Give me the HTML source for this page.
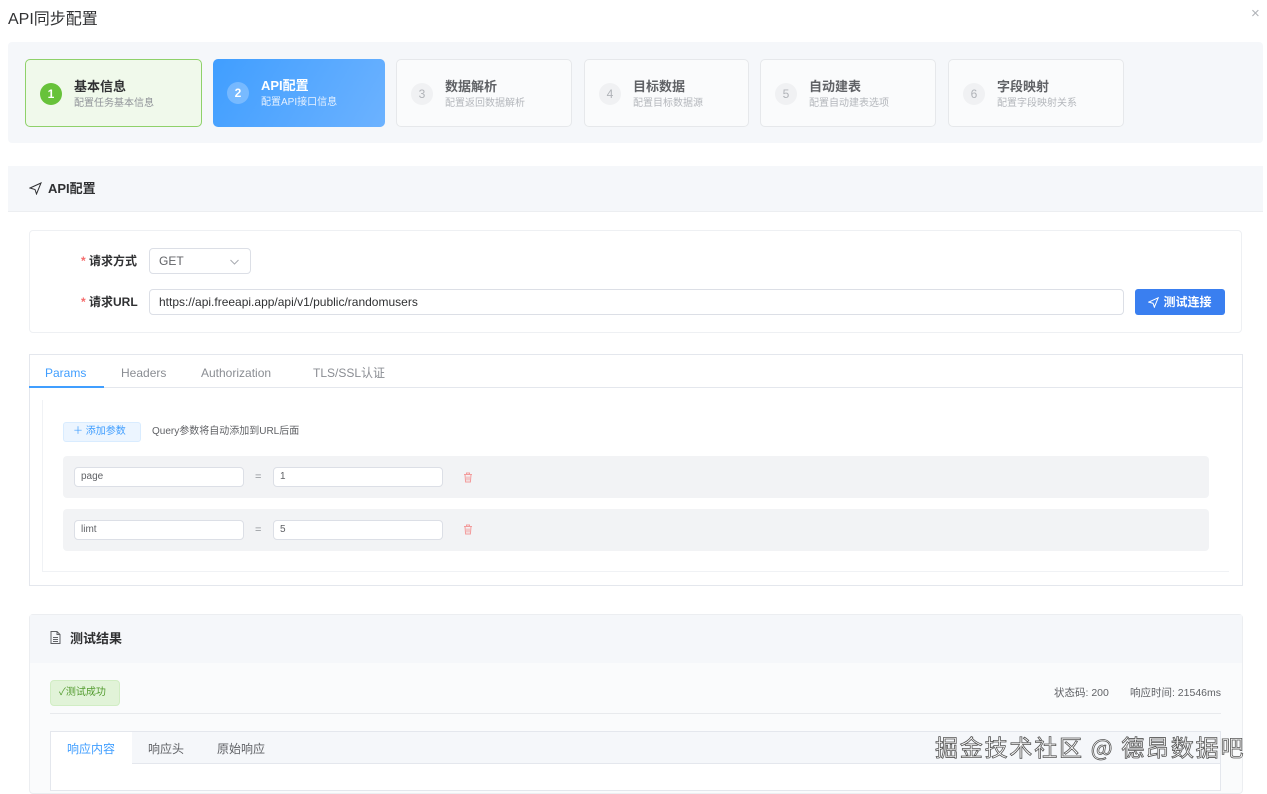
<!DOCTYPE html>
<html><head><meta charset="utf-8"><style>
*{box-sizing:border-box;margin:0;padding:0}
body{width:1267px;height:784px;overflow:hidden;background:#fff;font-family:"Liberation Sans","Noto Sans CJK SC",sans-serif;color:#303133;position:relative;line-height:1}
.a{position:absolute}
.card{position:absolute;top:59px;height:68px;border-radius:5px;border:1px solid #e6e8eb;background:#fafbfc}
.card .n{position:absolute;left:14px;top:23px;width:22px;height:22px;border-radius:50%;background:#f0f1f3;color:#b0b3b8;font-size:12px;text-align:center;line-height:22px}
.card .t{position:absolute;left:48px;top:20px;font-size:13px;font-weight:bold;color:#606266}
.card .s{position:absolute;left:48px;top:39px;font-size:10px;color:#b4b7bc}
.inp{position:absolute;background:#fff;border:1px solid #dcdfe6;border-radius:4px;font-size:10px;color:#606266;padding-left:6px}
.inp span.v{position:absolute;left:6px;top:50%;transform:translateY(-50%)}
.tab{position:absolute;top:366px;font-size:12px;color:#8a8d93;line-height:14px}
</style></head><body>
<div class="a" style="left:8px;top:12px;font-size:16px;color:#303133">API同步配置</div>
<div class="a" style="left:1251px;top:6px;font-size:15px;color:#b0b3b8">×</div>

<div class="a" style="left:8px;top:42px;width:1255px;height:101px;background:#f5f7fa;border-radius:4px"></div>
<div class="card" style="left:25px;width:177px;border:1px solid #8fd16a;background:#f0f9eb"><div class="n" style="background:#67c23a;color:#fff;font-weight:bold">1</div><div class="t" style="color:#303133">基本信息</div><div class="s" style="color:#909399">配置任务基本信息</div></div>
<div class="card" style="left:213px;width:172px;border:none;background:linear-gradient(120deg,#409eff,#6cb2ff)"><div class="n" style="background:rgba(255,255,255,.25);color:#fff;font-weight:bold">2</div><div class="t" style="color:#fff">API配置</div><div class="s" style="color:#e6f1ff">配置API接口信息</div></div>
<div class="card" style="left:396px;width:176px"><div class="n">3</div><div class="t">数据解析</div><div class="s">配置返回数据解析</div></div>
<div class="card" style="left:584px;width:165px"><div class="n">4</div><div class="t">目标数据</div><div class="s">配置目标数据源</div></div>
<div class="card" style="left:760px;width:176px"><div class="n">5</div><div class="t">自动建表</div><div class="s">配置自动建表选项</div></div>
<div class="card" style="left:948px;width:176px"><div class="n">6</div><div class="t">字段映射</div><div class="s">配置字段映射关系</div></div>

<div class="a" style="left:8px;top:166px;width:1255px;height:46px;background:#f5f7fa;border-bottom:1px solid #eceef1"></div>
<svg class="a" style="left:29px;top:182px" width="13" height="13" viewBox="0 0 13 13"><path d="M12 1L1 6l5 1.5L7.5 12z" fill="none" stroke="#303133" stroke-width="1"/></svg>
<div class="a" style="left:48px;top:182px;font-size:13px;font-weight:bold">API配置</div>

<div class="a" style="left:29px;top:230px;width:1213px;height:103px;border:1px solid #eef0f3;border-radius:4px"></div>
<div class="a" style="left:81px;top:255px;font-size:12px;font-weight:bold;color:#303133"><span style="color:#f56c6c">* </span>请求方式</div>
<div class="a" style="left:81px;top:296px;font-size:12px;font-weight:bold;color:#303133"><span style="color:#f56c6c">* </span>请求URL</div>
<div class="inp" style="left:149px;top:248px;width:102px;height:26px;font-size:12px"><span class="v" style="left:9px">GET</span><svg style="position:absolute;right:11px;top:10px" width="9" height="6" viewBox="0 0 9 6"><path d="M.5 1l4 4 4-4" fill="none" stroke="#a8abb2"/></svg></div>
<div class="inp" style="left:149px;top:289px;width:975px;height:26px;font-size:12px;color:#303133"><span class="v" style="left:9px">https://api.freeapi.app/api/v1/public/randomusers</span></div>
<div class="a" style="left:1135px;top:289px;width:90px;height:26px;background:#3a7ff0;border-radius:3px;color:#fff;font-size:12px;font-weight:bold;display:flex;align-items:center;justify-content:center;gap:4px">
<svg width="11" height="11" viewBox="0 0 13 13"><path d="M12 1L1 6l5 1.5L7.5 12z" fill="none" stroke="#fff" stroke-width="1.2"/></svg>测试连接</div>

<div class="a" style="left:29px;top:354px;width:1214px;height:232px;border:1px solid #e4e7ed"></div>
<div class="a" style="left:29px;top:387px;width:1214px;height:1px;background:#e4e7ed"></div>
<div class="a" style="left:29px;top:386px;width:75px;height:2px;background:#409eff"></div>
<div class="tab" style="left:45px;color:#409eff">Params</div>
<div class="tab" style="left:121px">Headers</div>
<div class="tab" style="left:201px">Authorization</div>
<div class="tab" style="left:313px">TLS/SSL认证</div>
<div class="a" style="left:42px;top:400px;width:1187px;height:172px;border:1px solid #f0f2f5;border-top:none;border-right:none"></div>
<div class="a" style="left:63px;top:422px;width:78px;height:20px;background:#ecf5ff;border:1px solid #d9ecff;border-radius:3px;color:#409eff;font-size:10px;display:flex;align-items:center;padding-left:9px">＋ 添加参数</div>
<div class="a" style="left:152px;top:427px;font-size:10px;color:#606266">Query参数将自动添加到URL后面</div>
<div class="a" style="left:63px;top:456px;width:1146px;height:42px;background:#f2f3f5;border-radius:4px"></div>
<div class="a" style="left:63px;top:509px;width:1146px;height:42px;background:#f2f3f5;border-radius:4px"></div>
<div class="inp" style="left:74px;top:467px;width:170px;height:20px"><span class="v">page</span></div>
<div class="a" style="left:255px;top:472px;font-size:11px;color:#909399">=</div>
<div class="inp" style="left:273px;top:467px;width:170px;height:20px"><span class="v">1</span></div>
<div class="inp" style="left:74px;top:520px;width:170px;height:20px"><span class="v">limt</span></div>
<div class="a" style="left:255px;top:525px;font-size:11px;color:#909399">=</div>
<div class="inp" style="left:273px;top:520px;width:170px;height:20px"><span class="v">5</span></div>
<svg class="a" style="left:463px;top:472px" width="10" height="11" viewBox="0 0 10 11"><path d="M1 2.5h8M3.5 2.5V1h3v1.5M2 2.5l.6 7.5h4.8L8 2.5M4 4.5v4M6 4.5v4" fill="none" stroke="#f39b9b" stroke-width="1"/></svg>
<svg class="a" style="left:463px;top:524px" width="10" height="11" viewBox="0 0 10 11"><path d="M1 2.5h8M3.5 2.5V1h3v1.5M2 2.5l.6 7.5h4.8L8 2.5M4 4.5v4M6 4.5v4" fill="none" stroke="#f39b9b" stroke-width="1"/></svg>

<div class="a" style="left:29px;top:614px;width:1214px;height:180px;border:1px solid #eceef1;border-radius:4px;background:#fafbfc"></div>
<div class="a" style="left:30px;top:615px;width:1212px;height:48px;background:#f5f7fa"></div>
<svg class="a" style="left:50px;top:631px" width="11" height="13" viewBox="0 0 11 13"><path d="M1 .5h6l3 3v9H1zM7 .5v3h3M3 6.5h5M3 8.5h5M3 10.5h5" fill="none" stroke="#606266" stroke-width="1"/></svg>
<div class="a" style="left:70px;top:632px;font-size:13px;font-weight:bold">测试结果</div>
<div class="a" style="left:50px;top:680px;width:70px;height:26px;background:#e1f3d8;border:1px solid #d1edc4;border-radius:4px;font-size:10px;color:#529b2e;display:flex;align-items:center;padding-left:8px">✓测试成功</div>
<div class="a" style="left:1054px;top:688px;width:167px;font-size:10.5px;color:#606266;display:flex;justify-content:space-between"><span>状态码: 200</span><span>响应时间: 21546ms</span></div>
<div class="a" style="left:50px;top:713px;width:1171px;height:1px;background:#e8eaed"></div>
<div class="a" style="left:50px;top:731px;width:1171px;height:60px;border:1px solid #e4e7ed;background:#fff"></div>
<div class="a" style="left:51px;top:732px;width:1169px;height:32px;background:#f5f7fa;border-bottom:1px solid #e4e7ed"></div>
<div class="a" style="left:51px;top:732px;width:81px;height:33px;background:#fff"></div>
<div class="a" style="left:67px;top:743px;font-size:12px;color:#409eff">响应内容</div>
<div class="a" style="left:148px;top:743px;font-size:12px;color:#606266">响应头</div>
<div class="a" style="left:217px;top:743px;font-size:12px;color:#606266">原始响应</div>
<div class="a" style="left:935px;top:735px;font-size:23px;letter-spacing:1.8px;color:#fff;-webkit-text-stroke:0.8px #555;font-family:'Noto Sans CJK SC',sans-serif;white-space:nowrap">掘金技术社区 @ 德昂数据吧</div>
</body></html>
